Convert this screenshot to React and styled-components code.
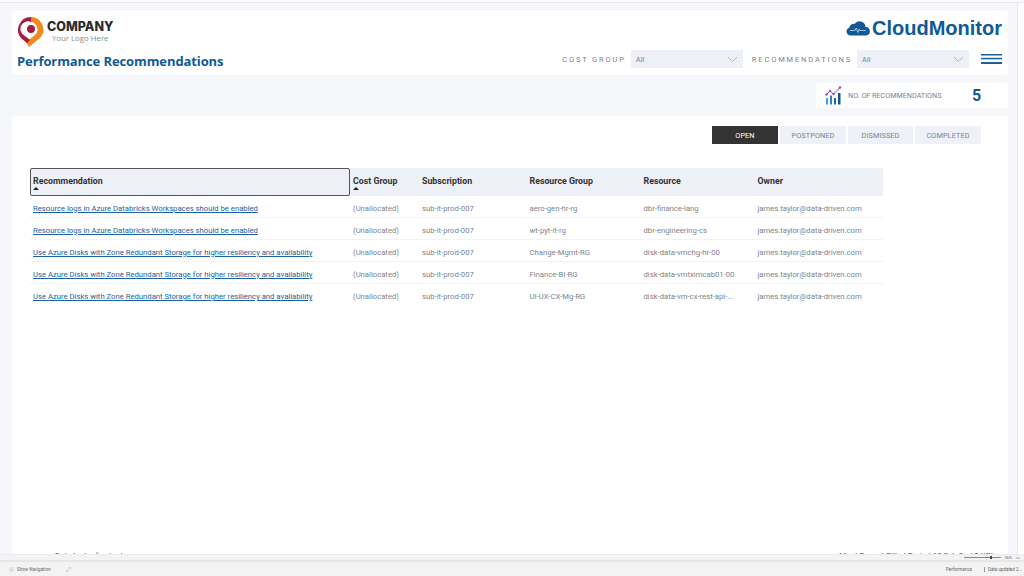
import React from 'react';
import styled, { createGlobalStyle } from 'styled-components';
import { ChevronDown, Menu, Maximize2 } from 'lucide-react';

const GlobalStyle = createGlobalStyle`
  html, body {
    margin: 0;
    padding: 0;
    width: 1024px;
    height: 576px;
    overflow: hidden;
    background: #fff;
    font-family: "Roboto", "Liberation Sans", sans-serif;
  }
  * { box-sizing: border-box; }
`;

const Screen = styled.div`
  width: 1024px;
  height: 576px;
  display: flex;
  flex-direction: column;
`;

const TopEdge = styled.div`
  height: 3px;
  flex-shrink: 0;
  background: #fafafa;
  border-bottom: 1px solid #e8e8e8;
`;

const ReportWrap = styled.div`
  height: 551px;
  flex-shrink: 0;
  display: flex;
  background: #fff;
`;

const Report = styled.div`
  width: 1018px;
  padding: 8px 9px 0 12px;
  display: flex;
  flex-direction: column;
  gap: 8px;
  background: #f5f7fb;
  border-right: 1px solid #e6e8ec;
`;

const Header = styled.header`
  height: 64px;
  flex-shrink: 0;
  display: flex;
  justify-content: space-between;
  background: #fff;
  border-radius: 3px;
  padding: 5px 6px 0 5px;
`;

const Brand = styled.div`
  display: flex;
  flex-direction: column;
`;

const LogoRow = styled.div`
  display: flex;
  align-items: flex-start;
  gap: 2px;
`;

const LogoText = styled.div`
  display: flex;
  flex-direction: column;
  padding-top: 5px;
`;

const CompanyName = styled.div`
  font-family: "Inter", sans-serif;
  font-weight: 800;
  font-size: 12.5px;
  line-height: 12px;
  color: #2b2b2b;
`;

const Tagline = styled.div`
  font-family: "Open Sans", sans-serif;
  font-size: 7.8px;
  line-height: 11px;
  margin-left: 5px;
  color: #8a8a8a;
`;

const PageTitle = styled.h1`
  margin: 4px 0 0;
  font-family: "Open Sans", sans-serif;
  font-weight: 700;
  font-size: 13px;
  letter-spacing: -0.1px;
  line-height: 19px;
  color: #0f5a96;
`;

const HeaderRight = styled.div`
  display: flex;
  flex-direction: column;
  align-items: flex-end;
`;

const CloudLogo = styled.div`
  display: flex;
  align-items: center;
  gap: 1px;
  height: 24px;
  font-family: "Liberation Sans", sans-serif;
  font-weight: 700;
  font-size: 20px;
  color: #0f5a96;
`;

const Filters = styled.div`
  display: flex;
  align-items: center;
  margin-top: 10px;
`;

const FilterLabel = styled.span`
  font-size: 7.5px;
  letter-spacing: 1.85px;
  color: #7b8490;
  margin-left: 9px;
  margin-right: 5px;
  white-space: nowrap;
`;

const Dropdown = styled.div`
  width: 112px;
  height: 18px;
  display: flex;
  align-items: center;
  justify-content: space-between;
  padding: 0 2px 0 5px;
  font-size: 7.5px;
  color: #7b8490;
  background: #edf0f7;
`;

const Hamburger = styled.div`
  display: flex;
  margin-left: 12px;
`;

const KpiRow = styled.div`
  height: 25px;
  flex-shrink: 0;
  display: flex;
  justify-content: flex-end;
`;

const KpiCard = styled.div`
  width: 192px;
  display: flex;
  align-items: center;
  padding-left: 9px;
  background: #fff;
  border-radius: 3px;
`;

const KpiLabel = styled.span`
  width: 124px;
  margin-left: 6px;
  font-size: 7.2px;
  color: #7b8490;
  white-space: nowrap;
`;

const KpiValue = styled.span`
  font-weight: 700;
  font-size: 16px;
  color: #0f5a96;
`;

const MainCard = styled.main`
  flex: 1;
  min-height: 0;
  overflow: hidden;
  background: #fff;
  border-radius: 3px 3px 0 0;
`;

const CardBody = styled.div`
  height: 435px;
  padding: 10px 27px 0 18px;
`;

const Tabs = styled.div`
  display: flex;
  justify-content: flex-end;
  gap: 2px;
`;

const Tab = styled.div`
  width: ${(p) => p.$width}px;
  height: 18px;
  display: flex;
  align-items: center;
  justify-content: center;
  font-size: 7.3px;
  letter-spacing: 0.1px;
  background: ${(p) => (p.$active ? '#333' : '#eef1f8')};
  color: ${(p) => (p.$active ? '#fff' : '#7b8490')};
`;

const Table = styled.div`
  width: 853px;
  margin-top: 24px;
`;

const columns = '320px 69px 107.5px 114px 114px 128.5px';

const HeadRow = styled.div`
  display: grid;
  grid-template-columns: ${columns};
  height: 28px;
  background: #edf0f7;
`;

const HeadCell = styled.div`
  position: relative;
  padding: 7px 3px 0;
  font-size: 8.8px;
  font-weight: 700;
  line-height: 12px;
  color: #333;
  ${(p) => p.$focused && `
    outline: 1px solid #555;
    outline-offset: -1px;
    border-radius: 2px;
  `}
`;

const SortMark = styled.span`
  position: absolute;
  left: 3px;
  top: 19px;
  width: 0;
  height: 0;
  border-left: 3px solid transparent;
  border-right: 3px solid transparent;
  border-bottom: 3px solid #222;
`;

const Row = styled.div`
  display: grid;
  grid-template-columns: ${columns};
  height: 22px;
  padding-top: 3px;
  align-items: center;
  border-bottom: 1px solid #f2f3f6;
  &:last-child { border-bottom: none; }
`;

const Cell = styled.div`
  padding: 0 3px;
  font-size: 7.7px;
  color: #7b8490;
  white-space: nowrap;
  overflow: hidden;
`;

const RecLink = styled.a`
  padding: 0 3px;
  font-size: 7.7px;
  color: #1c629c;
  text-decoration: underline;
  white-space: nowrap;
`;

const CardFooter = styled.div`
  display: flex;
  justify-content: space-between;
  padding: 0 11px 0 43px;
  font-size: 8px;
  line-height: 10px;
  color: #555;
`;

const BottomBar = styled.div`
  flex: 1;
  display: flex;
  flex-direction: column;
  background: #f3f3f3;
  color: #666;
`;

const ZoomStrip = styled.div`
  height: 8px;
  display: flex;
  align-items: center;
  justify-content: flex-end;
  gap: 4px;
  padding-right: 4px;
  font-size: 4px;
  border-top: 1px solid #ebebeb;
  border-bottom: 2px solid #e6e6e6;
`;

const ZoomTrack = styled.div`
  position: relative;
  width: 37px;
  height: 1px;
  background: #888;
`;

const ZoomThumb = styled.span`
  position: absolute;
  left: 26px;
  top: -1px;
  width: 2px;
  height: 3px;
  background: #444;
`;

const StatusRow = styled.div`
  flex: 1;
  display: flex;
  align-items: center;
  padding: 0 2px 0 9px;
  font-size: 4.5px;
`;

const NavGroup = styled.div`
  display: flex;
  align-items: center;
  gap: 3px;
`;

const NavSpacer = styled.div`
  width: 9px;
`;

const PageName = styled.span`
  margin-left: auto;
  margin-right: 12px;
`;

const Updated = styled.span`
  padding-left: 3px;
  border-left: 1px solid #999;
  white-space: nowrap;
`;

const PinLogo = () => (
  <svg width="28" height="32" viewBox="0 0 28 32">
    <path d="M14 1A12.500 12.500 0 0 1 23 22L12 31l-3-5 9-7A7.500 7.500 0 0 0 14 6z" fill="#ef8a1f" />
    <path d="M14 1A12.800 12.800 0 0 0 5 23l5 4 3-3-5-4A7.500 7.500 0 0 1 14 6z" fill="#a31d45" />
    <circle cx="14" cy="13" r="4" fill="#a31d45" />
  </svg>
);

const CloudIcon = () => (
  <svg width="25" height="16" viewBox="0 0 25 16">
    <path d="M4.500 15.500a4 4 0 0 1-1.200-7.800A4.200 4.200 0 0 1 8.500 4a6 6 0 0 1 11 3a4.300 4.300 0 0 1 1 8.500z" fill="#0f5a96" />
    <path d="M4 10.500h5l1.200-2.500 1.600 4.500 1.400-3.500.8 1.500H20" fill="none" stroke="#fff" strokeWidth="0.6" />
  </svg>
);

const HamburgerIcon = () => (
  <svg width="21" height="10" viewBox="0 0 21 10">
    <rect y="0" width="21" height="1.500" fill="#19609c" />
    <rect y="3.800" width="21" height="1.500" fill="#19609c" />
    <rect y="8" width="21" height="2" fill="#19609c" />
  </svg>
);

const ChartIcon = () => (
  <svg width="17" height="19" viewBox="0 0 17 19">
    <path d="M1.500 8.500L5 5l3.500 3L15 1.500" fill="none" stroke="#8b4fd8" strokeWidth="1" />
    <circle cx="1.500" cy="8.500" r="1.200" fill="#8b4fd8" />
    <circle cx="5" cy="5" r="1.200" fill="#8b4fd8" />
    <circle cx="8.500" cy="8" r="1.200" fill="#8b4fd8" />
    <circle cx="15" cy="1.500" r="1.200" fill="#8b4fd8" />
    <rect x="1" y="12" width="2" height="6.500" fill="#3f9ce0" />
    <rect x="5" y="9.500" width="2" height="9" fill="#2f7fc4" />
    <rect x="9" y="12" width="2" height="6.500" fill="#1f6cac" />
    <rect x="13" y="7" width="2.500" height="11.500" fill="#0f5a96" />
  </svg>
);

const rows = [
  ['Resource logs in Azure Databricks Workspaces should be enabled', 'aero-gen-hr-rg', 'dbr-finance-lang'],
  ['Resource logs in Azure Databricks Workspaces should be enabled', 'wt-pyt-it-rg', 'dbr-engineering-cs'],
  ['Use Azure Disks with Zone Redundant Storage for higher resiliency and availability', 'Change-Mgmt-RG', 'disk-data-vmchg-hr-00'],
  ['Use Azure Disks with Zone Redundant Storage for higher resiliency and availability', 'Finance-BI-RG', 'disk-data-vmtximcab01-00'],
  ['Use Azure Disks with Zone Redundant Storage for higher resiliency and availability', 'UI-UX-CX-Mg-RG', 'disk-data-vm-cx-rest-api-...'],
];

const tabs = [
  { name: 'OPEN', width: 66, active: true },
  { name: 'POSTPONED', width: 66 },
  { name: 'DISMISSED', width: 65 },
  { name: 'COMPLETED', width: 66 },
];

export default function App() {
  return (
    <Screen>
      <GlobalStyle />
      <TopEdge />
      <ReportWrap>
        <Report>
          <Header>
            <Brand>
              <LogoRow>
                <PinLogo />
                <LogoText>
                  <CompanyName>COMPANY</CompanyName>
                  <Tagline>Your Logo Here</Tagline>
                </LogoText>
              </LogoRow>
              <PageTitle>Performance Recommendations</PageTitle>
            </Brand>
            <HeaderRight>
              <CloudLogo>
                <CloudIcon />
                CloudMonitor
              </CloudLogo>
              <Filters>
                <FilterLabel>COST GROUP</FilterLabel>
                <Dropdown>All <ChevronDown size={17} strokeWidth={0.9} color="#8a93a0" /></Dropdown>
                <FilterLabel>RECOMMENDATIONS</FilterLabel>
                <Dropdown>All <ChevronDown size={17} strokeWidth={0.9} color="#8a93a0" /></Dropdown>
                <Hamburger><HamburgerIcon /></Hamburger>
              </Filters>
            </HeaderRight>
          </Header>
          <KpiRow>
            <KpiCard>
              <ChartIcon />
              <KpiLabel>NO. OF RECOMMENDATIONS</KpiLabel>
              <KpiValue>5</KpiValue>
            </KpiCard>
          </KpiRow>
          <MainCard>
            <CardBody>
              <Tabs>
                {tabs.map((t) => (
                  <Tab key={t.name} $width={t.width} $active={t.active}>{t.name}</Tab>
                ))}
              </Tabs>
              <Table>
                <HeadRow>
                  <HeadCell $focused>Recommendation<SortMark /></HeadCell>
                  <HeadCell>Cost Group<SortMark /></HeadCell>
                  <HeadCell>Subscription</HeadCell>
                  <HeadCell>Resource Group</HeadCell>
                  <HeadCell>Resource</HeadCell>
                  <HeadCell>Owner</HeadCell>
                </HeadRow>
                {rows.map((r, i) => (
                  <Row key={i}>
                    <RecLink>{r[0]}</RecLink>
                    <Cell>(Unallocated)</Cell>
                    <Cell>sub-it-prod-007</Cell>
                    <Cell>{r[1]}</Cell>
                    <Cell>{r[2]}</Cell>
                    <Cell>james.taylor@data-driven.com</Cell>
                  </Row>
                ))}
              </Table>
            </CardBody>
            <CardFooter>
              <span>Data last refreshed on</span>
              <span>Most Recent Billed Period 18 Feb 2nd 0 KPIs</span>
            </CardFooter>
          </MainCard>
        </Report>
      </ReportWrap>
      <BottomBar>
        <ZoomStrip>
          <ZoomTrack><ZoomThumb /></ZoomTrack>
          <span>36%</span>
          <span>▭</span>
        </ZoomStrip>
        <StatusRow>
          <NavGroup>
            <Menu size={5} strokeWidth={1} />
            <span>Show Navigation</span>
            <NavSpacer />
            <Maximize2 size={5} strokeWidth={1} />
          </NavGroup>
          <PageName>Performance</PageName>
          <Updated>Data updated 2...</Updated>
        </StatusRow>
      </BottomBar>
    </Screen>
  );
}
